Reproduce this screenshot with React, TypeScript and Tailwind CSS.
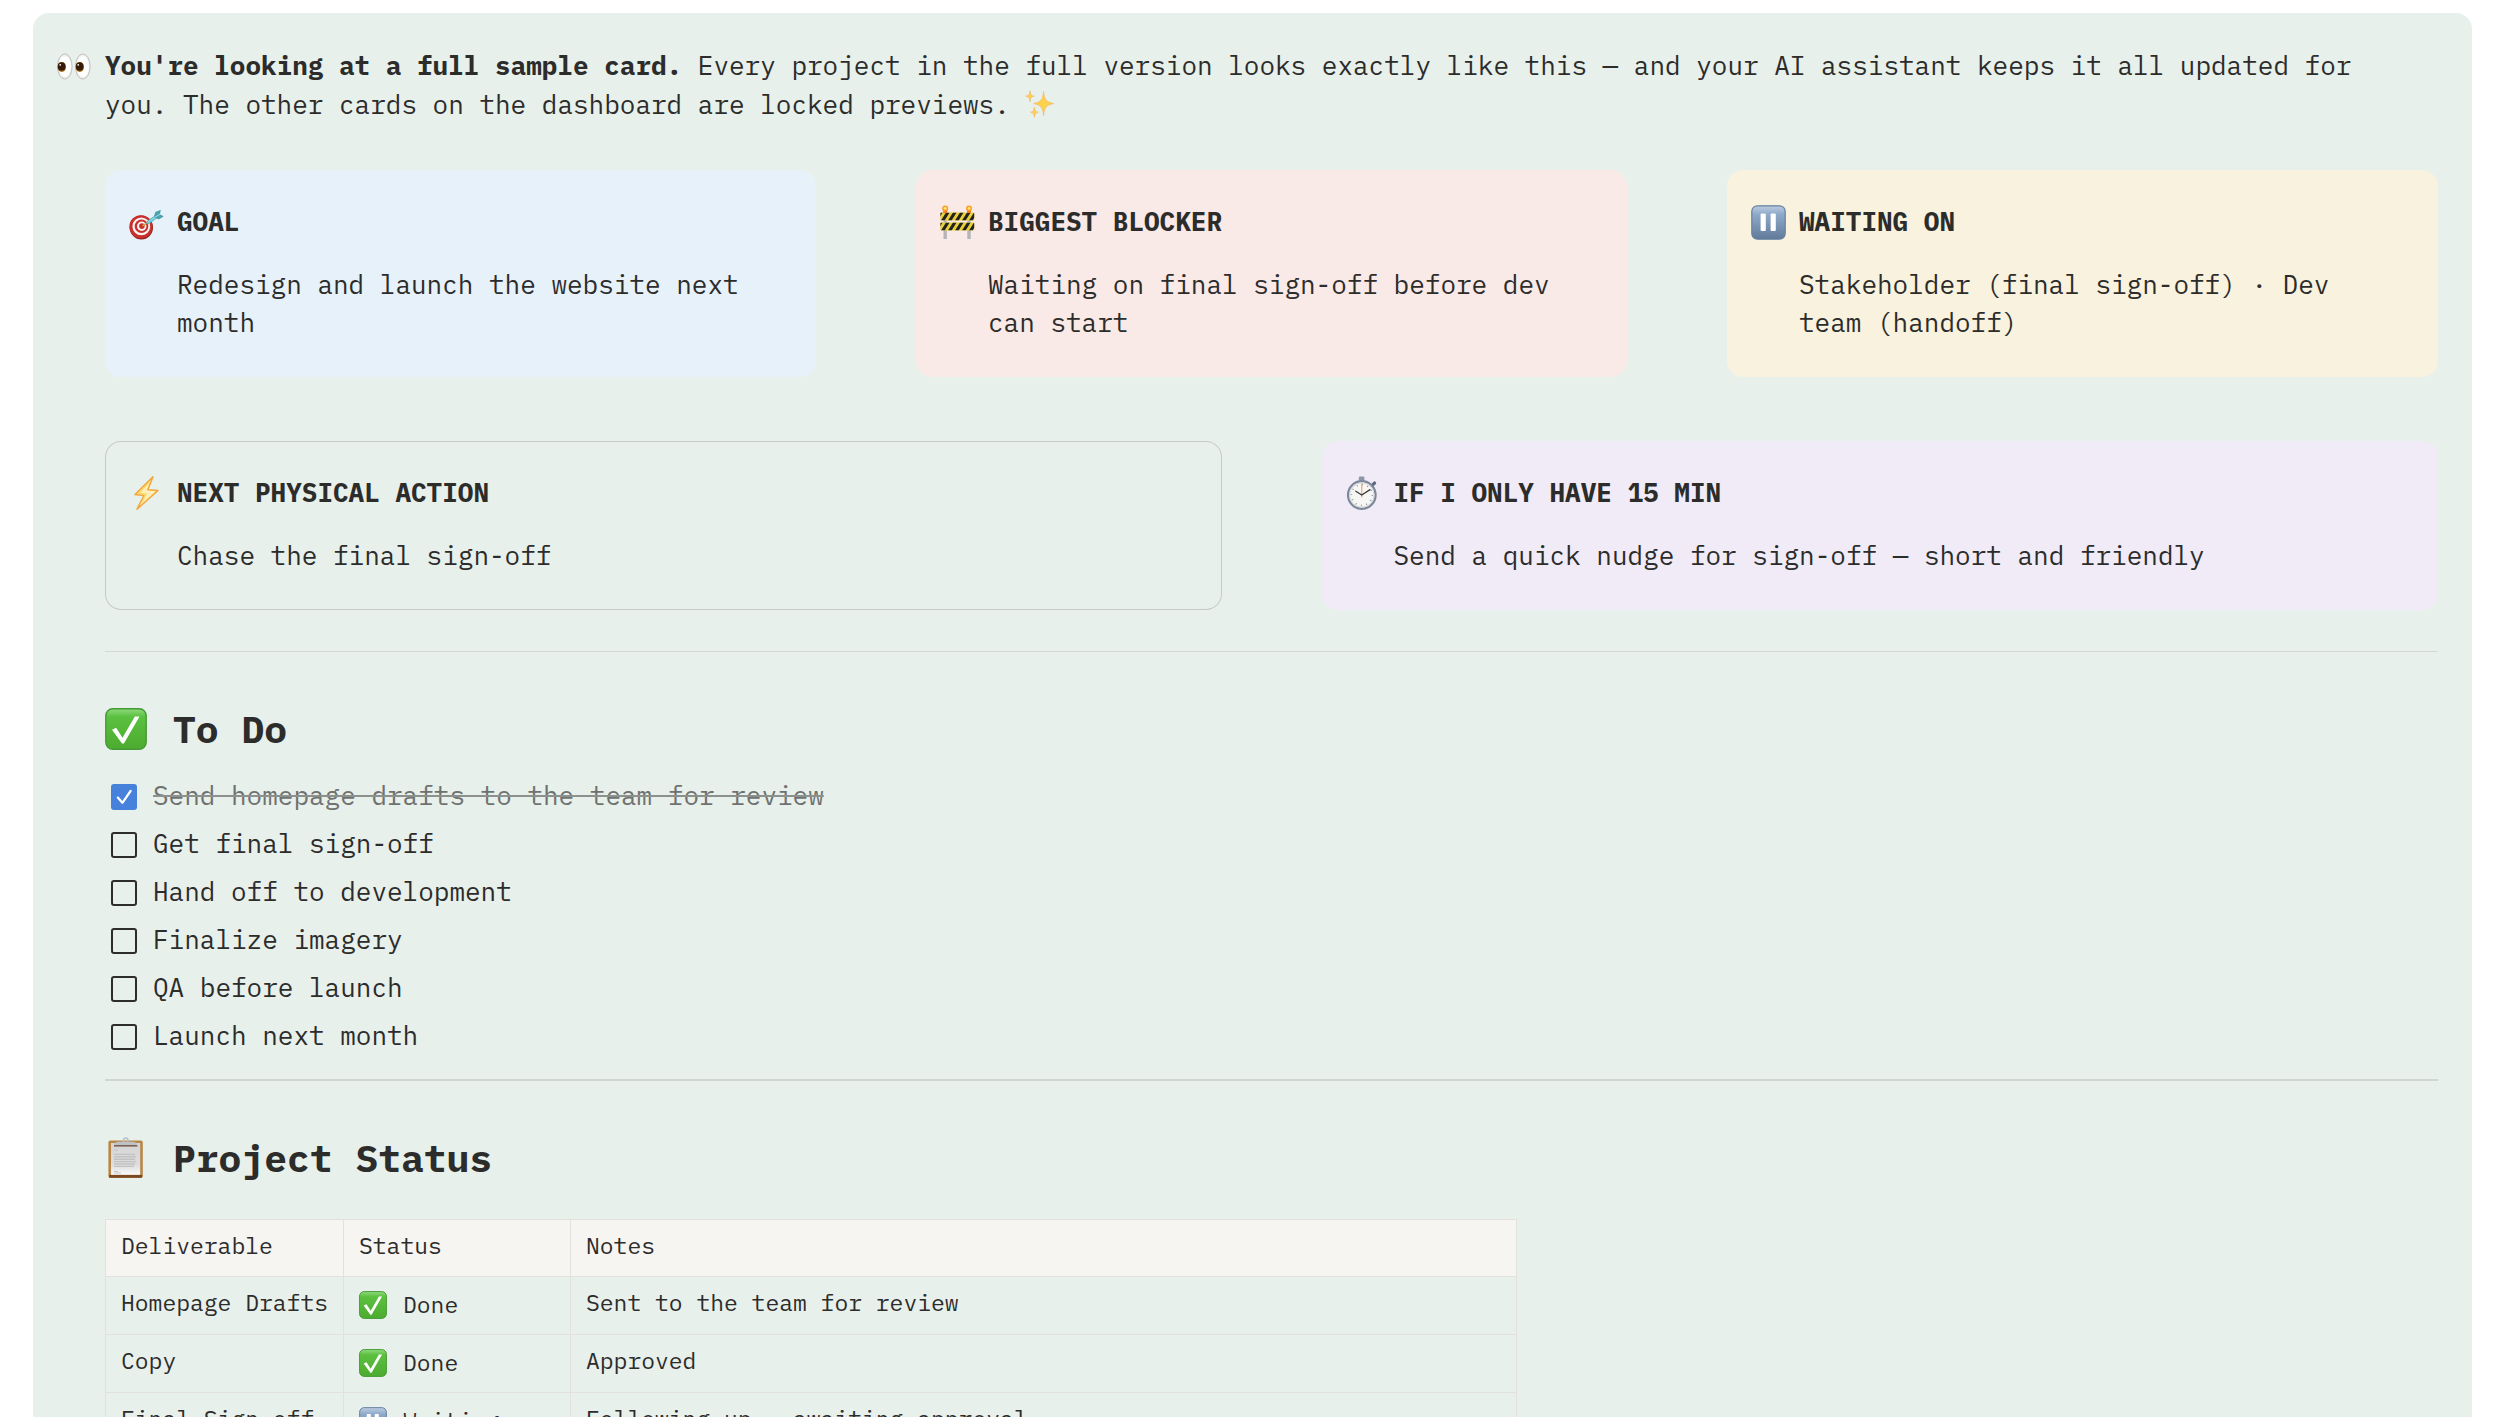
import { useState } from 'react';
import type { ReactNode } from 'react';

interface Callout {
  title: string;
  text: string;
  icon: ReactNode;
  className: string;
}

interface Todo {
  id: string;
  label: string;
  done: boolean;
}

interface Deliverable {
  name: string;
  status: 'Done' | 'Waiting';
  notes: string;
}

function EyesIcon() {
  return (
    <svg viewBox="0 0 35 35" className="size-[35px]" aria-hidden="true">
      <defs>
        <radialGradient id="eye-white">
          <stop offset="0.75" stopColor="#ffffff" />
          <stop offset="1" stopColor="#e3e3e3" />
        </radialGradient>
      </defs>
      {[0, 18].map((x) => (
        <g key={x}>
          <ellipse cx={7.8 + x} cy="17.5" rx="7.3" ry="12.6" fill="url(#eye-white)" stroke="#bcbcbc" strokeWidth="0.9" />
          <ellipse cx={4.8 + x} cy="18" rx="4.2" ry="5" fill="#a06a12" />
          <ellipse cx={4.6 + x} cy="17.4" rx="3.8" ry="4.2" fill="#381a08" />
          <circle cx={3.2 + x} cy="15.8" r="0.9" fill="#ffffff" />
        </g>
      ))}
    </svg>
  );
}

function TargetIcon() {
  return (
    <svg viewBox="0 0 35 35" className="size-[35px]" aria-hidden="true">
      <ellipse cx="12.4" cy="22.6" rx="11.6" ry="12" fill="#8f1d1c" />
      <ellipse cx="11.9" cy="21.8" rx="11.6" ry="11.6" fill="#c8302c" />
      <ellipse cx="12.3" cy="21.4" rx="8.9" ry="8.9" fill="#f7f1f0" />
      <ellipse cx="12.5" cy="21.3" rx="6.8" ry="6.8" fill="#c8302c" />
      <ellipse cx="12.7" cy="21.2" rx="4.7" ry="4.7" fill="#f7f1f0" />
      <ellipse cx="12.9" cy="21.1" rx="2.8" ry="2.8" fill="#c8302c" />
      <path d="M13.5 20.8 18.5 17.6" stroke="#d6a53a" strokeWidth="1.5" />
      <path d="M17.3 18.6 19 15.6 26.5 10.6 28 12.8 20.5 18.3Z" fill="#7fd3df" stroke="#3f9aab" strokeWidth="0.6" />
      <path d="M25.5 11 26.6 7.2 31.4 5.4 30.4 9.4 34.2 11.4 29.8 14 26.8 12.8Z" fill="#4aa3b0" stroke="#347f8d" strokeWidth="0.5" />
      <path d="M26 12.2 31.8 8.8" stroke="#a9e4ea" strokeWidth="0.9" />
    </svg>
  );
}

function BarrierIcon() {
  return (
    <svg viewBox="0 0 35 35" className="size-[35px]" aria-hidden="true">
      <defs>
        <clipPath id="barrier-boards">
          <rect x="0.4" y="7.6" width="33.8" height="8" rx="1" />
          <rect x="0.4" y="17.6" width="33.8" height="8" rx="1" />
        </clipPath>
      </defs>
      <path d="M5.2 14V34M29 14V34" stroke="#b5b5b8" strokeWidth="3.4" />
      <g clipPath="url(#barrier-boards)">
        <rect width="35" height="35" fill="#e6d13c" />
        {[-6, 1, 8, 15, 22, 29, 36].map((x) => (
          <path key={x} d={`M${x} 15.6 ${x + 5} 7.6h3.6l-5 8ZM${x} 25.6 ${x + 5} 17.6h3.6l-5 8Z`} fill="#26231c" />
        ))}
      </g>
      {[5.2, 29].map((x) => (
        <g key={x}>
          <path d={`M${x - 2} 4h4v3.8h-4Z`} fill="#f0691c" />
          <circle cx={x} cy="3.4" r="3" fill="#fb9c2a" />
          <circle cx={x} cy="3.2" r="1.5" fill="#ffe36b" />
        </g>
      ))}
    </svg>
  );
}

function PauseIcon({ className }: { className: string }) {
  return (
    <svg viewBox="0 0 35 35" className={className} aria-hidden="true">
      <defs>
        <linearGradient id="pause-face" x1="0" y1="0" x2="0" y2="1">
          <stop offset="0" stopColor="#bccde0" />
          <stop offset="0.25" stopColor="#8ea9ca" />
          <stop offset="1" stopColor="#627a99" />
        </linearGradient>
      </defs>
      <rect x="0.8" y="0.8" width="33.4" height="33.4" rx="5.6" fill="url(#pause-face)" stroke="#64809f" strokeWidth="1.2" />
      <rect x="9.6" y="8.6" width="5.2" height="17.4" rx="1" fill="#ffffff" />
      <rect x="19.6" y="8.6" width="5.2" height="17.4" rx="1" fill="#ffffff" />
    </svg>
  );
}

function BoltIcon() {
  return (
    <svg viewBox="0 0 35 35" className="size-[35px]" aria-hidden="true">
      <path
        d="M24 .8 6 18.6 15 19.6 8 33.2 28.8 14.6 18.8 13.8Z"
        fill="#fdf0b8"
        stroke="#f2a63b"
        strokeWidth="1.5"
        strokeLinejoin="round"
      />
      <path d="M20 6.5 10 17.2 17 18 13 26" fill="none" stroke="#fbd45a" strokeWidth="1.2" />
    </svg>
  );
}

function StopwatchIcon() {
  return (
    <svg viewBox="0 0 35 35" className="size-[35px]" aria-hidden="true">
      <rect x="12.8" y="0.4" width="5.6" height="4.4" rx="1.4" fill="#8e95a4" />
      <path d="M25.6 9.8 28.6 7" stroke="#5f6a80" strokeWidth="3.2" strokeLinecap="round" />
      <circle cx="15.8" cy="19" r="13.8" fill="#f6f6f4" stroke="#7e879a" strokeWidth="2.2" />
      <circle cx="15.8" cy="19" r="12.2" fill="none" stroke="#c9ced8" strokeWidth="0.8" />
      <circle cx="15.8" cy="19" r="10.4" fill="none" stroke="#8b8b8b" strokeWidth="1.6" strokeDasharray="0.8 4.645" />
      <path d="M15.8 21.5V7.6" stroke="#ef9a7d" strokeWidth="1.1" />
      <path d="M15.8 19 9.8 15.2M15.8 19 24 13.6" stroke="#3a3a3a" strokeWidth="1.3" strokeLinecap="round" />
    </svg>
  );
}

function CheckIcon({ className }: { className: string }) {
  return (
    <svg viewBox="0 0 36 36" className={className} aria-hidden="true">
      <defs>
        <linearGradient id="check-face" x1="0" y1="0" x2="0" y2="1">
          <stop offset="0" stopColor="#8fd97c" />
          <stop offset="0.2" stopColor="#5bc03f" />
          <stop offset="1" stopColor="#4cab30" />
        </linearGradient>
      </defs>
      <rect x="0.7" y="0.7" width="34.6" height="34.6" rx="6" fill="url(#check-face)" stroke="#449a35" strokeWidth="1.2" />
      <path d="M6 18.6 9.6 17 15 25.4 25.6 7.2H29.6L16.2 30.4H14.6Z" fill="#ffffff" />
    </svg>
  );
}

function ClipboardIcon() {
  return (
    <svg viewBox="0 0 42 42" className="size-[42px]" aria-hidden="true">
      <defs>
        <linearGradient id="paper" x1="0" y1="0" x2="0" y2="1">
          <stop offset="0" stopColor="#d4d4d4" />
          <stop offset="0.7" stopColor="#dedede" />
          <stop offset="1" stopColor="#fafafa" />
        </linearGradient>
      </defs>
      <rect x="3.4" y="3.6" width="34.4" height="37.4" rx="2" fill="#b88746" />
      <rect x="4" y="37.8" width="33.2" height="3" rx="1" fill="#7c4a22" />
      <rect x="6" y="6" width="29.2" height="31.8" fill="url(#paper)" />
      <path d="M9 13h4M9 34.4h4M9 36h7" stroke="#bdbdbd" strokeWidth="0.8" />
      <path d="M9 17.4h21M9 19.8h22M9 22.2h21M9 24.6h22M9 27h21M9 29.4h20" stroke="#c2c2c2" strokeWidth="1.4" />
      <circle cx="20.6" cy="3.4" r="2.4" fill="none" stroke="#b3bfcf" strokeWidth="1.4" />
      <path d="M9.4 8.4c0-2.6 1.6-3.6 4-3.6h14.4c2.4 0 4 1 4 3.6Z" fill="#bdc0c6" />
      <path d="M9 8.8h23.4" stroke="#7b6252" strokeWidth="1.6" />
    </svg>
  );
}

function SparklesIcon() {
  return (
    <svg viewBox="0 0 31 30" className="inline-block h-[30px] w-[31px] align-[-6px]" aria-hidden="true">
      <g fill="#fbd24e" stroke="#f3b76a" strokeWidth="0.7" strokeLinejoin="round">
        <path d="M18.6 1.6C19.6 9.6 20.8 12 28.6 13.6 20.8 15.2 19.6 17.6 18.6 25.6 17.6 17.6 16.4 15.2 8.6 13.6 16.4 12 17.6 9.6 18.6 1.6Z" />
        <path d="M5 .8C5.5 4.4 6 5.6 9.2 6.2 6 6.8 5.5 8 5 11.6 4.5 8 4 6.8 .8 6.2 4 5.6 4.5 4.4 5 .8Z" />
        <path d="M9.4 17C9.9 20.2 10.4 21.6 13.2 22.2 10.4 22.8 9.9 24.2 9.4 27.4 8.9 24.2 8.4 22.8 5.6 22.2 8.4 21.6 8.9 20.2 9.4 17Z" />
      </g>
    </svg>
  );
}

const topCallouts: Callout[] = [
  {
    title: 'GOAL',
    text: 'Redesign and launch the website next month',
    icon: <TargetIcon />,
    className: 'bg-[#e7f1fa]',
  },
  {
    title: 'BIGGEST BLOCKER',
    text: 'Waiting on final sign-off before dev can start',
    icon: <BarrierIcon />,
    className: 'bg-[#f9e9e7]',
  },
  {
    title: 'WAITING ON',
    text: 'Stakeholder (final sign-off) · Dev team (handoff)',
    icon: <PauseIcon className="size-[35px]" />,
    className: 'bg-[#f8f2df]',
  },
];

const bottomCallouts: Callout[] = [
  {
    title: 'NEXT PHYSICAL ACTION',
    text: 'Chase the final sign-off',
    icon: <BoltIcon />,
    className: 'ring-1 ring-inset ring-[#c5ccc7]',
  },
  {
    title: 'IF I ONLY HAVE 15 MIN',
    text: 'Send a quick nudge for sign-off — short and friendly',
    icon: <StopwatchIcon />,
    className: 'bg-[#f1ebf8]',
  },
];

const initialTodos: Todo[] = [
  { id: 'drafts', label: 'Send homepage drafts to the team for review', done: true },
  { id: 'signoff', label: 'Get final sign-off', done: false },
  { id: 'handoff', label: 'Hand off to development', done: false },
  { id: 'imagery', label: 'Finalize imagery', done: false },
  { id: 'qa', label: 'QA before launch', done: false },
  { id: 'launch', label: 'Launch next month', done: false },
];

const deliverables: Deliverable[] = [
  { name: 'Homepage Drafts', status: 'Done', notes: 'Sent to the team for review' },
  { name: 'Copy', status: 'Done', notes: 'Approved' },
  { name: 'Final Sign-off', status: 'Waiting', notes: 'Following up — awaiting approval' },
];

function CalloutCard({ callout }: { callout: Callout }) {
  return (
    <section className={`flex gap-[13px] rounded-2xl pt-8 pr-9 pb-9 pl-6 ${callout.className}`}>
      <div className="mt-[3px] shrink-0">{callout.icon}</div>
      <div className="leading-[38px]">
        <h3 className="font-bold">{callout.title}</h3>
        <p className="mt-[25px]">{callout.text}</p>
      </div>
    </section>
  );
}

function SectionHeading({ icon, children }: { icon: ReactNode; children: ReactNode }) {
  return (
    <h2 className="mt-[52px] flex items-center gap-[26px] text-[38px] leading-[50px] font-bold">
      {icon}
      {children}
    </h2>
  );
}

function TodoItem({ todo, onToggle }: { todo: Todo; onToggle: () => void }) {
  return (
    <li className="flex items-start gap-4 pl-1.5 leading-[48px]">
      <span className="mt-[13px] grid size-[26px] shrink-0">
        <input
          id={todo.id}
          type="checkbox"
          checked={todo.done}
          onChange={onToggle}
          className="col-start-1 row-start-1 size-[26px] appearance-none rounded-[3px] border-2 border-[#2c2c2b] checked:border-[#4681db] checked:bg-[#4681db]"
        />
        {todo.done && (
          <svg viewBox="0 0 26 26" className="pointer-events-none col-start-1 row-start-1 size-[26px]" aria-hidden="true">
            <path
              d="M6.8 13.6 11.4 18.8 19.6 7"
              fill="none"
              stroke="#ffffff"
              strokeWidth="2.2"
              strokeLinecap="round"
              strokeLinejoin="round"
            />
          </svg>
        )}
      </span>
      <label htmlFor={todo.id} className={todo.done ? 'text-[#6f7270] line-through decoration-[#8d918e] decoration-2' : ''}>
        {todo.label}
      </label>
    </li>
  );
}

export default function App() {
  const [todos, setTodos] = useState<Todo[]>(initialTodos);

  const toggle = (id: string) => {
    setTodos(todos.map((t) => (t.id === id ? { ...t, done: !t.done } : t)));
  };

  return (
    <div className="h-screen overflow-hidden bg-white pt-[13px] pr-7 pl-[33px] font-['IBM_Plex_Mono','Liberation_Mono',monospace] text-[26px] text-[#2c2c2b]">
      <main className="flex gap-[13px] rounded-2xl bg-[#e8f0eb] pt-[33px] pr-[34px] pb-12 pl-6">
        <div className="mt-[3px] shrink-0">
          <EyesIcon />
        </div>

        <div className="min-w-0 flex-1">
          <p className="pr-8 leading-[39px]">
            <strong className="font-bold">You're looking at a full sample card.</strong> Every project in the full version
            looks exactly like this — and your AI assistant keeps it all updated for you. The other cards on the dashboard
            are locked previews. <SparklesIcon />
          </p>

          <div className="mt-[46px] grid grid-cols-3 gap-x-[100px]">
            {topCallouts.map((c) => (
              <CalloutCard key={c.title} callout={c} />
            ))}
          </div>

          <div className="mt-16 grid grid-cols-2 gap-x-[100px]">
            {bottomCallouts.map((c) => (
              <CalloutCard key={c.title} callout={c} />
            ))}
          </div>

          <hr className="mt-[41px] border-[#d2d8d3]" />

          <SectionHeading icon={<CheckIcon className="size-[42px]" />}>To Do</SectionHeading>
          <ul className="mt-[17px]">
            {todos.map((t) => (
              <TodoItem key={t.id} todo={t} onToggle={() => toggle(t.id)} />
            ))}
          </ul>

          <hr className="mt-5 border-t-2 border-[#cfd5d0]" />

          <SectionHeading icon={<ClipboardIcon />}>Project Status</SectionHeading>
          <table className="mt-9 border-collapse text-left text-[23px] leading-[35px]">
            <thead className="bg-[#f7f5f2]">
              <tr>
                <th className="w-[238px] border border-[#e3e1df] px-[15px] pt-2 pb-[13px] font-normal">Deliverable</th>
                <th className="w-[227px] border border-[#e3e1df] px-[15px] pt-2 pb-[13px] font-normal">Status</th>
                <th className="w-[946px] border border-[#e3e1df] px-[15px] pt-2 pb-[13px] font-normal">Notes</th>
              </tr>
            </thead>
            <tbody>
              {deliverables.map((d) => (
                <tr key={d.name} className="align-top">
                  <td className="border border-[#e3e1df] px-[15px] pt-2 pb-3.5 whitespace-nowrap">{d.name}</td>
                  <td className="border border-[#e3e1df] px-[15px] pt-2.5 pb-3">
                    <span className="flex items-center gap-4">
                      {d.status === 'Done' ? <CheckIcon className="size-7" /> : <PauseIcon className="size-7" />}
                      {d.status}
                    </span>
                  </td>
                  <td className="border border-[#e3e1df] px-[15px] pt-2 pb-3.5">{d.notes}</td>
                </tr>
              ))}
            </tbody>
          </table>
        </div>
      </main>
    </div>
  );
}
